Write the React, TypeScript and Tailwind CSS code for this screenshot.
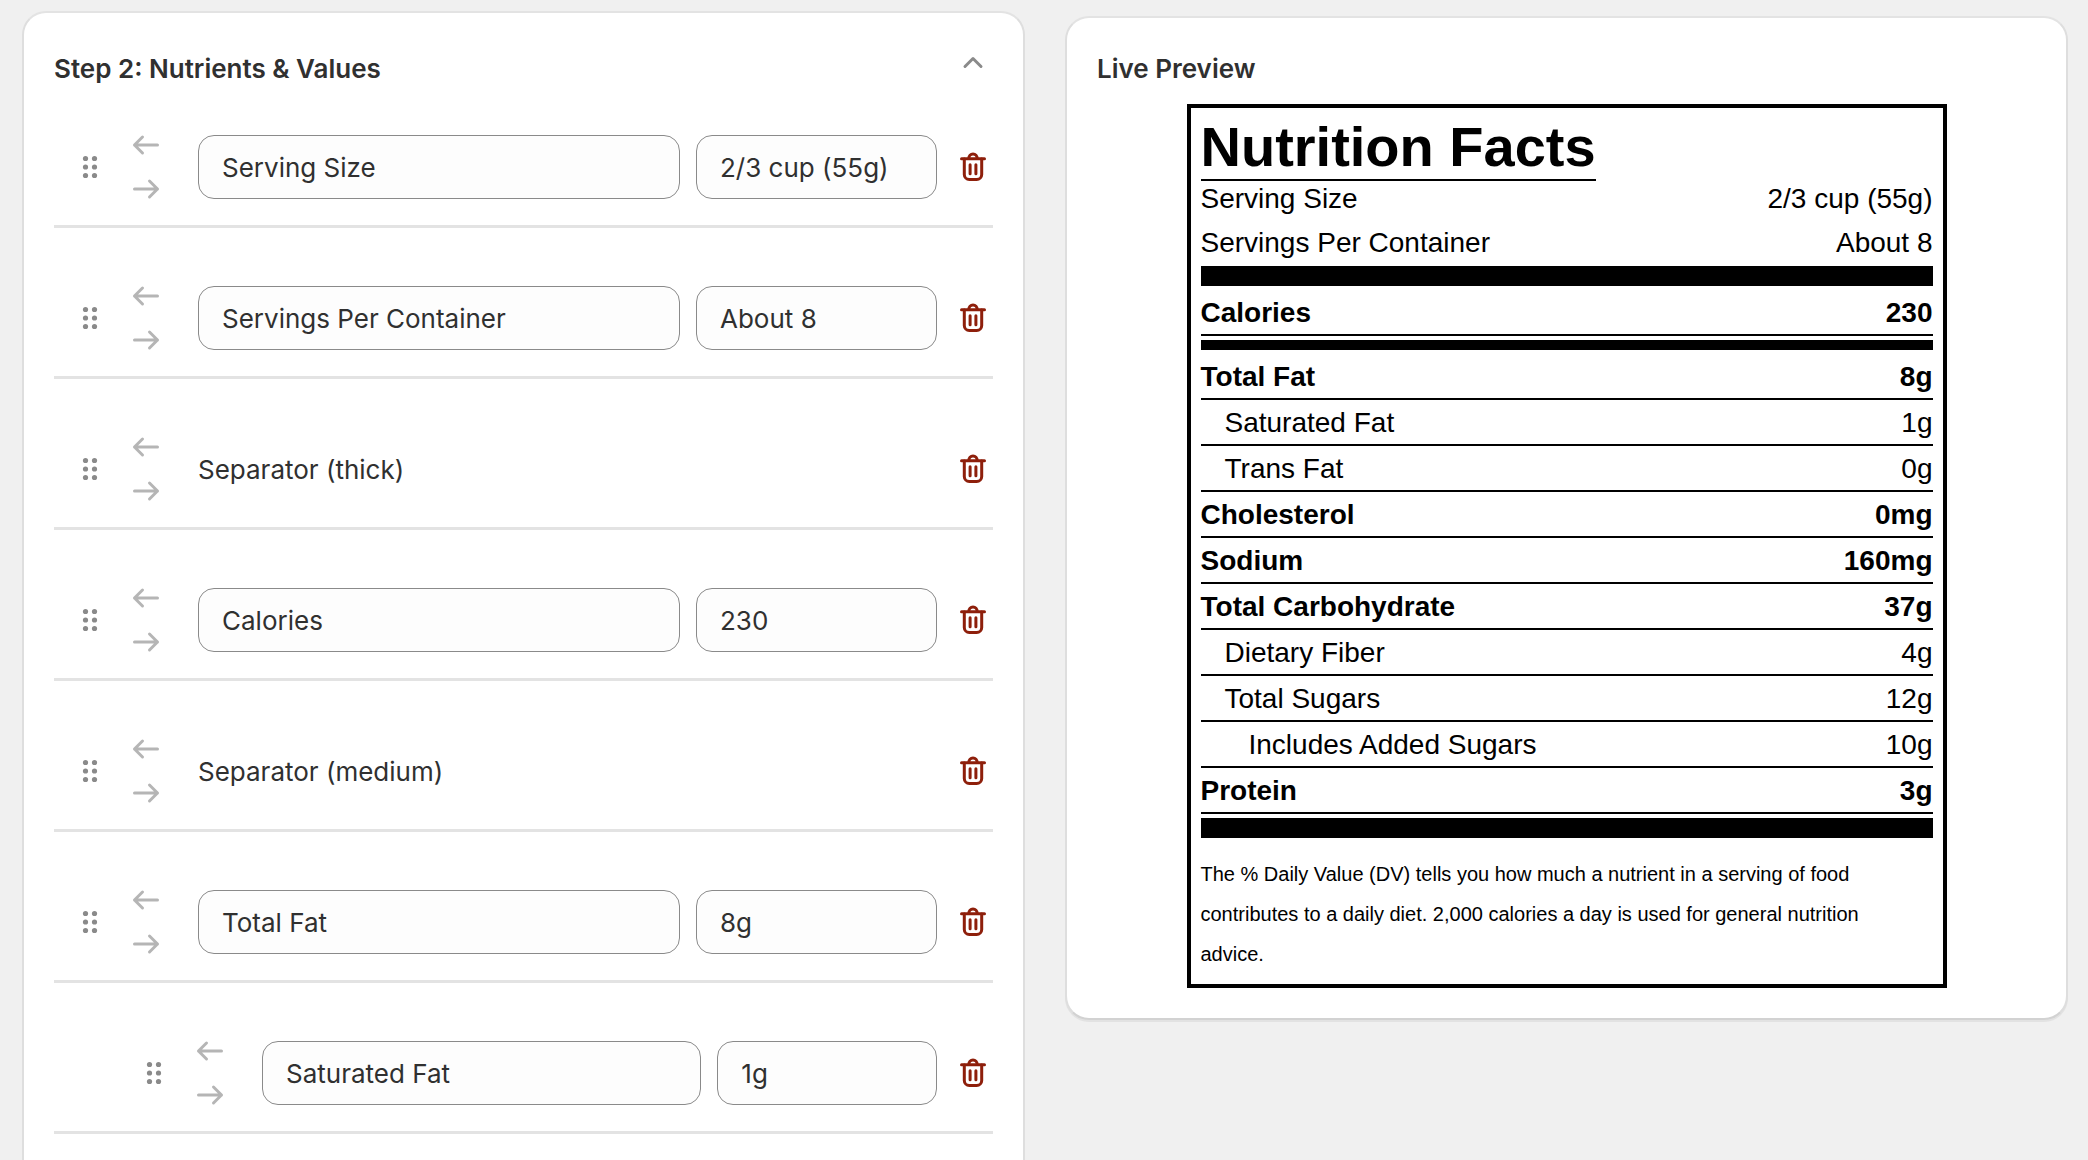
import { useState } from "react";

type Row = {
  id: string;
  label: string;
  value?: string;
  indent?: number;
  separator?: boolean;
};

const initialRows: Row[] = [
  { id: "serving-size", label: "Serving Size", value: "2/3 cup (55g)" },
  { id: "servings", label: "Servings Per Container", value: "About 8" },
  { id: "sep-thick", label: "Separator (thick)", separator: true },
  { id: "calories", label: "Calories", value: "230" },
  { id: "sep-medium", label: "Separator (medium)", separator: true },
  { id: "total-fat", label: "Total Fat", value: "8g" },
  { id: "saturated-fat", label: "Saturated Fat", value: "1g", indent: 1 },
];

const facts = [
  { label: "Total Fat", value: "8g", level: 0 },
  { label: "Saturated Fat", value: "1g", level: 1 },
  { label: "Trans Fat", value: "0g", level: 1 },
  { label: "Cholesterol", value: "0mg", level: 0 },
  { label: "Sodium", value: "160mg", level: 0 },
  { label: "Total Carbohydrate", value: "37g", level: 0 },
  { label: "Dietary Fiber", value: "4g", level: 1 },
  { label: "Total Sugars", value: "12g", level: 1 },
  { label: "Includes Added Sugars", value: "10g", level: 2 },
  { label: "Protein", value: "3g", level: 0 },
];

const levelClass = ["font-bold", "pl-6", "pl-12"];

const cardClass =
  "min-w-0 rounded-3xl border-2 border-x-[#dedede] border-t-[#e3e3e3] border-b-[#d2d2d2] bg-white px-[30px] text-[#303030] shadow-[0_2px_0_0_#e2e2e2]";

function DragIcon() {
  return (
    <svg viewBox="0 0 40 40" className="size-10" fill="#8a8a8a" aria-hidden="true">
      {[11.5, 20, 28.5].map((y) => (
        <g key={y}>
          <circle cx="15.5" cy={y} r="2.6" />
          <circle cx="24.5" cy={y} r="2.6" />
        </g>
      ))}
    </svg>
  );
}

function ArrowIcon({ flip = false }: { flip?: boolean }) {
  return (
    <svg
      viewBox="0 0 40 40"
      className="size-10"
      fill="none"
      stroke="#b5b5b5"
      strokeWidth="3"
      strokeLinecap="round"
      strokeLinejoin="round"
      aria-hidden="true"
    >
      {flip ? <path d="M8.5 20h23M23.5 12l8 8-8 8" /> : <path d="M31.5 20h-23M16.5 12l-8 8 8 8" />}
    </svg>
  );
}

function TrashIcon() {
  return (
    <svg
      viewBox="0 0 40 40"
      className="size-10"
      fill="none"
      stroke="#8e1f0b"
      strokeWidth="3"
      strokeLinecap="round"
      strokeLinejoin="round"
      aria-hidden="true"
    >
      <path d="M8.500 11.700h23" />
      <path d="M15.800 11.500c0-2.600 1.800-4.500 4.200-4.500s4.200 1.900 4.200 4.500" />
      <path d="M11.300 12v15.500a5 5 0 0 0 5 5h7.400a5 5 0 0 0 5-5V12" />
      <path d="M17.100 17.700v9M22.900 17.700v9" />
    </svg>
  );
}

const inputClass =
  "h-16 w-full min-w-0 rounded-2xl border border-[#8a8a8a] bg-[#fdfdfd] px-[23px] text-[26px] text-[#303030] outline-none";

function NutrientRow({ row, onChange, onDelete }: { row: Row; onChange: (r: Row) => void; onDelete: () => void }) {
  return (
    <li
      className={`flex items-center border-b-[3px] border-[#e3e3e3] pt-[46px] pb-3.5 first:pt-7 ${row.indent ? "pl-20" : "pl-4"}`}
    >
      <button type="button" aria-label={`Move ${row.label}`} className="shrink-0 cursor-grab">
        <DragIcon />
      </button>
      <div className="ml-4 flex shrink-0 flex-col">
        <button type="button" aria-label={`Outdent ${row.label}`} className="flex h-11 items-center">
          <ArrowIcon />
        </button>
        <button type="button" aria-label={`Indent ${row.label}`} className="flex h-11 items-center">
          <ArrowIcon flip />
        </button>
      </div>
      {row.separator ? (
        <span className="ml-8 flex-1 pt-0.5 text-[26px] leading-10">{row.label}</span>
      ) : (
        <div className="ml-8 grid min-w-0 flex-1 grid-cols-[2fr_1fr] gap-4">
          <input
            type="text"
            aria-label={`${row.label} name`}
            className={inputClass}
            value={row.label}
            onChange={(e) => onChange({ ...row, label: e.target.value })}
          />
          <input
            type="text"
            aria-label={`${row.label} value`}
            className={inputClass}
            value={row.value}
            onChange={(e) => onChange({ ...row, value: e.target.value })}
          />
        </div>
      )}
      <button type="button" aria-label={`Delete ${row.label}`} className="ml-4 shrink-0" onClick={onDelete}>
        <TrashIcon />
      </button>
    </li>
  );
}

function NutritionLabel() {
  return (
    <div className="mx-auto w-full max-w-[760px] border-4 border-black bg-white p-2.5 font-['Liberation_Sans',Arial,sans-serif] text-[28px] text-black">
      <h3 className="w-fit border-b-2 border-black pb-[3px] text-[56px] leading-[58px] font-bold">Nutrition Facts</h3>
      <dl className="grid gap-2 pb-px leading-9">
        <div className="flex justify-between">
          <dt>Serving Size</dt>
          <dd>2/3 cup (55g)</dd>
        </div>
        <div className="flex justify-between">
          <dt>Servings Per Container</dt>
          <dd>About 8</dd>
        </div>
      </dl>
      <div className="my-1 h-5 bg-black" />
      <dl className="flex justify-between border-b-2 border-black pt-0.5 leading-[42px] font-bold">
        <dt>Calories</dt>
        <dd>230</dd>
      </dl>
      <div className="my-1 h-2.5 bg-black" />
      <dl className="leading-[42px]">
        {facts.map((f) => (
          <div
            key={f.label}
            className={`flex justify-between border-b-2 border-black pt-0.5 ${f.level === 0 ? "font-bold" : ""}`}
          >
            <dt className={levelClass[f.level]}>{f.label}</dt>
            <dd>{f.value}</dd>
          </div>
        ))}
      </dl>
      <div className="my-1 h-5 bg-black" />
      <p className="mt-4 pr-8 text-xl leading-10">
        The % Daily Value (DV) tells you how much a nutrient in a serving of food contributes to a daily diet. 2,000
        calories a day is used for general nutrition advice.
      </p>
    </div>
  );
}

export default function App() {
  const [rows, setRows] = useState(initialRows);
  const [open, setOpen] = useState(true);

  return (
    <main className="grid h-screen grid-cols-2 items-start gap-10 overflow-hidden bg-[#f0f0f0] pt-[11px] pr-5 pl-[22px] font-[Inter,sans-serif]">
      <section className={`${cardClass} pt-[30px] pb-20`}>
        <header className="flex justify-between">
          <h2 className="text-[26px] leading-[52px] font-semibold">Step 2: Nutrients &amp; Values</h2>
          <button type="button" aria-label="Toggle section" aria-expanded={open} className="size-10" onClick={() => setOpen(!open)}>
            <svg
              viewBox="0 0 40 40"
              className="size-10"
              fill="none"
              stroke="#8a8a8a"
              strokeWidth="3"
              strokeLinecap="round"
              strokeLinejoin="round"
              aria-hidden="true"
            >
              <path d="M12 23.500l8-8 8 8" />
            </svg>
          </button>
        </header>
        {open && (
          <ul>
            {rows.map((row) => (
              <NutrientRow
                key={row.id}
                row={row}
                onChange={(next) => setRows(rows.map((r) => (r.id === next.id ? next : r)))}
                onDelete={() => setRows(rows.filter((r) => r.id !== row.id))}
              />
            ))}
          </ul>
        )}
      </section>
      <section className={`${cardClass} mt-[5px] py-[30px]`}>
        <h2 className="mb-3.5 text-[26px] leading-[42px] font-semibold">Live Preview</h2>
        <NutritionLabel />
      </section>
    </main>
  );
}
